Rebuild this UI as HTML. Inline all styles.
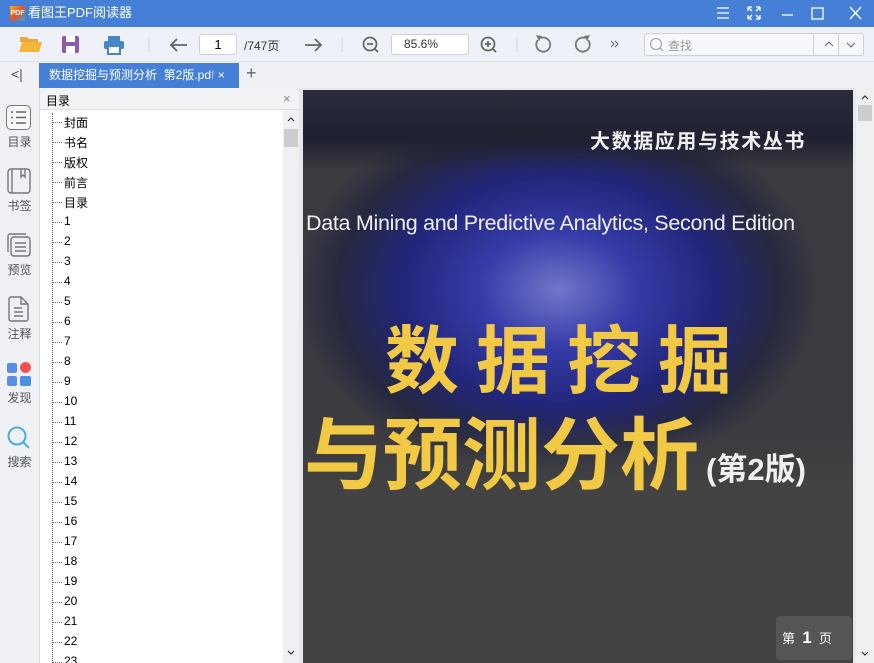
<!DOCTYPE html>
<html><head><meta charset="utf-8"><style>
*{margin:0;padding:0;box-sizing:border-box}
html{overflow:hidden;width:874px;height:663px}
body{width:874px;height:663px;overflow:hidden;font-family:"Liberation Sans","Noto Sans CJK SC",sans-serif;font-size:12px;background:#eef1f5;position:relative}
.abs{position:absolute}
#title{left:0;top:0;width:874px;height:27px;background:#4580d6;color:#fff}
#tb{left:0;top:27px;width:874px;height:35px;background:#eef2f8;border-bottom:1px solid #dde2ea}
#tabs{left:0;top:62px;width:874px;height:26px;background:#eff1f4}
#side{left:0;top:88px;width:39px;height:575px;background:#eff1f4}
#toc{left:39px;top:88px;width:260px;height:575px;background:#fff;border-left:1px solid #d9dde3;overflow:hidden}
#view{left:299px;top:88px;width:575px;height:575px;background:#e6e8ec;overflow:hidden}
.item{position:absolute;left:24px;font-size:12px;color:#000}
.dot{position:absolute;left:13px;width:9px;border-top:1px dotted #666}
.sl{position:absolute;left:0;width:39px;text-align:center;color:#555;font-size:12px}
.y{color:#f2c944;font-weight:bold;position:absolute;white-space:nowrap}
</style></head><body>
<div id="title" class="abs">
 <div class="abs" style="left:10px;top:6px;width:15px;height:15px;background:linear-gradient(135deg,#f5b31d,#e94e2a 50%,#2fa7e0);font-size:7px;color:#fff;line-height:15px;text-align:center;font-weight:bold">PDF</div>
 <div class="abs" style="left:28px;top:4px;font-size:13px;line-height:18px">看图王PDF阅读器</div>
 <svg class="abs" style="left:710px;top:0" width="164" height="27" fill="none" stroke="#fff" stroke-width="1.3">
  <path d="M7 8h12M7 13h12M7 18h12"/>
  <path d="M38 7l4 4M38 7h4M38 7v4M50 7l-4 4M50 7h-4M50 7v4M38 19l4-4M38 19h4M38 19v-4M50 19l-4-4M50 19h-4M50 19v-4"/>
  <path d="M72 15h11"/>
  <rect x="102" y="8" width="11" height="11"/>
  <path d="M140 7l11 12M151 7l-11 12"/>
 </svg>
</div>
<div id="tb" class="abs">
 <svg class="abs" style="left:0;top:0" width="874" height="35">
  <path d="M20 10h7l2 2h9v3H20z" fill="#e9a93a"/><path d="M19 25l3-10h20l-3 10z" fill="#f3b53a"/>
  <rect x="62" y="9" width="17" height="17" rx="2" fill="#8f5aab"/><rect x="66" y="9" width="9" height="6" fill="#fff"/><rect x="66" y="19" width="9" height="7" fill="#fff"/>
  <rect x="104" y="14" width="20" height="8" rx="2" fill="#4486c9"/><rect x="108" y="9" width="12" height="5" fill="#4486c9"/><rect x="108" y="19" width="12" height="8" fill="#fff" stroke="#4486c9" stroke-width="2"/>
  <path d="M149 10v15M342 10v15M517 10v15" stroke="#d4d8de"/>
  <path d="M187 18h-16M177 12l-6 6 6 6" stroke="#666" stroke-width="1.8" fill="none"/>
  <path d="M305 18h16M315 12l6 6-6 6" stroke="#666" stroke-width="1.8" fill="none"/>
  <circle cx="370" cy="17" r="6.5" stroke="#666" stroke-width="1.8" fill="none"/><path d="M367 17h6M375 22l3 3" stroke="#666" stroke-width="1.8"/>
  <circle cx="488" cy="17" r="6.5" stroke="#666" stroke-width="1.8" fill="none"/><path d="M485 17h6M488 14v6M493 22l3 3" stroke="#666" stroke-width="1.8"/>
  <path d="M541 11a7 7 0 1 1 -3 2" stroke="#777" stroke-width="1.8" fill="none"/><path d="M536 8l6 1-3 5z" fill="#777"/>
  <path d="M585 11a7 7 0 1 0 3 2" stroke="#777" stroke-width="1.8" fill="none"/><path d="M590 8l-6 1 3 5z" fill="#777"/>
  <path d="M611 14l3 3-3 3M615 14l3 3-3 3" stroke="#666" fill="none"/>
  <path d="M447 16l3 3 3-3" stroke="#777" fill="none"/>
 </svg>
 <div class="abs" style="left:199px;top:7px;width:38px;height:21px;border:1px solid #ccd;border-radius:3px;background:#fff;text-align:center;line-height:19px;font-size:13px">1</div>
 <div class="abs" style="left:244px;top:10px;font-size:12px;color:#333">/747页</div>
 <div class="abs" style="left:391px;top:7px;width:78px;height:21px;border:1px solid #ccd;border-radius:3px;background:#fff;line-height:19px;font-size:12px;padding-left:12px;color:#333">85.6%</div>
 <div class="abs" style="left:644px;top:6px;width:220px;height:23px;border:1px solid #cdd2d9;border-radius:3px;background:#f6f8fb"></div>
 <div class="abs" style="left:813px;top:6px;width:1px;height:23px;background:#cdd2d9"></div>
 <div class="abs" style="left:838px;top:6px;width:1px;height:23px;background:#cdd2d9"></div>
 <svg class="abs" style="left:644px;top:6px" width="220" height="23" fill="none" stroke="#999"><circle cx="12" cy="11" r="5.5"/><path d="M16 15l3 3"/><path d="M181 13l4-4 4 4M203 10l4 4 4-4" stroke="#666"/></svg>
 <div class="abs" style="left:668px;top:10px;color:#999;font-size:12px">查找</div>
</div>
<div id="tabs" class="abs">
 <div class="abs" style="left:11px;top:4px;font-size:14px;color:#555">&lt;|</div>
 <div class="abs" style="left:39px;top:1px;width:200px;height:25px;background:#4580d6;color:#fff;font-size:12px;line-height:25px;padding-left:10px;white-space:nowrap;overflow:hidden">数据挖掘与预测分析&nbsp; 第2版.pd<span style="color:#9fbbe6">f</span> ×</div>
 <div class="abs" style="left:246px;top:1px;font-size:18px;color:#666">+</div>
</div>
<div id="side" class="abs">
 <div class="abs" style="left:6px;top:17px;width:25px;height:25px;border:1.5px solid #777;border-radius:5px;background:#f7f8fa"></div>
 <svg class="abs" style="left:6px;top:17px" width="25" height="25" stroke="#666" stroke-width="1.5"><path d="M5 7h2M10 7h10M5 12.5h2M10 12.5h10M5 18h2M10 18h10"/></svg>
 <div class="sl" style="top:45px">目录</div>
 <svg class="abs" style="left:7px;top:80px" width="24" height="26" fill="none" stroke="#777" stroke-width="1.4"><rect x="1" y="1" width="22" height="24" rx="3"/><path d="M5 1v24M14 1v8l2-2 2 2V1"/></svg>
 <div class="sl" style="top:109px">书签</div>
 <svg class="abs" style="left:6px;top:144px" width="26" height="26" fill="none" stroke="#777" stroke-width="1.4"><rect x="5" y="5" width="19" height="19" rx="3"/><path d="M2 20V4a2 2 0 0 1 2-2h16M9 11h11M9 15h11M9 19h11"/></svg>
 <div class="sl" style="top:173px">预览</div>
 <svg class="abs" style="left:8px;top:208px" width="22" height="26" fill="none" stroke="#777" stroke-width="1.4"><path d="M3 1h10l7 7v15a2 2 0 0 1-2 2H3a2 2 0 0 1-2-2V3a2 2 0 0 1 2-2zM13 1v7h7M6 12h8M6 16h9M6 20h9"/></svg>
 <div class="sl" style="top:237px">注释</div>
 <div class="abs" style="left:7px;top:275px;width:10px;height:10px;background:#5b8ee8;border-radius:2px"></div>
 <div class="abs" style="left:20px;top:274px;width:11px;height:11px;background:#f05252;border-radius:50%"></div>
 <div class="abs" style="left:7px;top:288px;width:10px;height:10px;background:#5b8ee8;border-radius:2px"></div>
 <div class="abs" style="left:20px;top:288px;width:11px;height:10px;background:#4a90e2;border-radius:2px"></div>
 <div class="sl" style="top:301px">发现</div>
 <svg class="abs" style="left:6px;top:337px" width="26" height="26" fill="none" stroke="#48aee0" stroke-width="2"><circle cx="11" cy="11" r="8.5"/><path d="M17 17l6 6"/></svg>
 <div class="sl" style="top:365px">搜索</div>
</div>
<div id="toc" class="abs">
 <div class="abs" style="left:0;top:0;width:259px;height:22px;background:#f2f3f5;border-bottom:1px solid #dcdfe4"></div>
 <div class="abs" style="left:6px;top:4px;font-size:12px">目录</div>
 <div class="abs" style="left:243px;top:3px;color:#888;font-size:13px">×</div>
 <div class="abs" style="left:12px;top:25px;height:550px;border-left:1px dotted #666"></div>
 <div class="abs" style="left:243px;top:22px;width:16px;height:553px;background:#f0f0f0"></div>
 <div class="abs" style="left:244px;top:41px;width:14px;height:18px;background:#cdcdcd"></div>
 <svg class="abs" style="left:243px;top:22px" width="16" height="553" fill="none" stroke="#333" stroke-width="1.2"><path d="M5 11l3-3 3 3M5 541l3 3 3-3"/></svg>
 <div id="items"></div>
</div>
<div id="view" class="abs">
 <div class="abs" style="left:4px;top:2px;width:550px;height:573px;background:#434343;overflow:hidden">
  <div class="abs" style="left:0;top:0;width:550px;height:415px;background:radial-gradient(ellipse 260px 190px at 255px 200px,#7076c8 0%,#363ca8 30%,#22267a 60%,#26283f 85%,#3a3a40 100%)"></div>
  <div class="abs" style="left:0;top:0;width:550px;height:80px;background:linear-gradient(#2b2c3a,#1f2030 60%,rgba(30,32,60,0))"></div>
  <div class="abs" style="left:0;top:330px;width:550px;height:120px;background:linear-gradient(rgba(67,67,67,0),#434343 60%)"></div>
  <div class="abs" style="left:287px;top:35px;color:#f0f0f0;font-size:20px;font-weight:bold;white-space:nowrap;letter-spacing:1.6px">大数据应用与技术丛书</div>
  <div class="abs" style="left:3px;top:121px;color:#f0f0f0;font-size:21.5px;white-space:nowrap;letter-spacing:-0.3px">Data Mining and Predictive Analytics, Second Edition</div>
  <div class="y" style="left:82px;top:230px;font-size:74px;letter-spacing:17px;line-height:84px">数据挖掘</div>
  <div class="y" style="left:1px;top:322px;font-size:79px;letter-spacing:0px;line-height:88px">与预测分析</div>
  <div class="abs" style="left:403px;top:354px;color:#f0f0f0;font-size:31px;font-weight:bold;white-space:nowrap">(第2版)</div>
  <div class="abs" style="left:473px;top:526px;width:76px;height:44px;background:#555;border-radius:4px;color:#fff;font-size:13px;line-height:44px;white-space:nowrap;padding-left:6px">第 &nbsp;<b style="font-size:17px">1</b> &nbsp;页</div>
 </div>
 <div class="abs" style="left:557px;top:0;width:18px;height:575px;background:#f0f0f0"></div>
 <div class="abs" style="left:559px;top:17px;width:14px;height:16px;background:#cdcdcd"></div>
 <svg class="abs" style="left:557px;top:0" width="18" height="575" fill="none" stroke="#333" stroke-width="1.2"><path d="M6 11l3-3 3 3M6 564l3 3 3-3"/></svg>
</div>
<script>
var l=["封面","书名","版权","前言","目录"];for(var i=1;i<=23;i++)l.push(""+i);
var h="";l.forEach(function(t,i){var y=26+i*20;h+='<div class="dot" style="top:'+(y+8)+'px"></div><div class="item" style="top:'+y+'px">'+t+'</div>';});
document.getElementById("items").innerHTML=h;
</script>
</body></html>
